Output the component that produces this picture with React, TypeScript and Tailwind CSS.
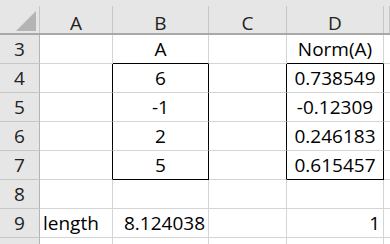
type Row = {
  n: number
  a?: string
  b?: string
  d?: string
  boxed?: boolean
  boxTop?: boolean
  boxEnd?: boolean
  numeric?: boolean
}

const rows: Row[] = [
  { n: 3, b: 'A', d: 'Norm(A)', boxTop: true },
  { n: 4, b: '6', d: '0.738549', boxed: true },
  { n: 5, b: '-1', d: '-0.12309', boxed: true },
  { n: 6, b: '2', d: '0.246183', boxed: true },
  { n: 7, b: '5', d: '0.615457', boxed: true, boxEnd: true },
  { n: 8 },
  { n: 9, a: 'length', b: '8.124038', d: '1', numeric: true },
]

const cols = ['A', 'B', 'C', 'D', '']

export default function App() {
  return (
    <div
      className="w-[390px] h-[244px] overflow-hidden bg-white text-[19px] leading-[20px] text-black"
      style={{ fontFamily: '"Open Sans", "Noto Sans", sans-serif' }}
    >
      {/* column letters */}
      <div className="bg-[#e6e6e6] pt-[6px] border-b-2 border-[#a8a8a8]">
        <div className="grid grid-cols-[40px_73px_96px_78px_97px_1fr] h-[27px]">
          <div className="flex justify-end items-end pr-[3px] pb-[2px] border-r border-[#c6c6c6]">
            <svg width="20" height="20" viewBox="0 0 20 20">
              <polygon points="20,0 20,20 0,20" fill="#b4b4b4" />
            </svg>
          </div>
          {cols.map((c, i) => (
            <div
              key={i}
              className="flex items-center justify-center pt-[6px] border-r border-[#c6c6c6] text-[#222]"
            >
              {c}
            </div>
          ))}
        </div>
      </div>

      {/* sheet body */}
      <div className="grid grid-cols-[40px_73px_96px_78px_97px_1fr]">
        {rows.map((r) => (
          <div key={r.n} className="contents">
            <div className="h-[29px] flex items-center justify-center bg-[#e6e6e6] border-r border-r-[#b4b4b4] border-b border-b-[#c6c6c6] text-[#222]">
              {r.n}
            </div>
            <div
              className={`h-[29px] flex items-center pl-[3px] border-r border-b border-b-[#d4d4d4] ${
                r.boxed ? 'border-r-black' : 'border-r-[#d4d4d4]'
              }`}
            >
              {r.a}
            </div>
            <div
              className={`h-[29px] flex items-center border-r border-b ${
                r.numeric ? 'justify-end pr-[3px]' : 'justify-center'
              } ${r.boxed ? 'border-r-black' : 'border-r-[#d4d4d4]'} ${
                r.boxTop || r.boxEnd ? 'border-b-black' : 'border-b-[#d4d4d4]'
              }`}
            >
              {r.b}
            </div>
            <div
              className={`h-[29px] border-r border-b border-b-[#d4d4d4] ${
                r.boxed ? 'border-r-black' : 'border-r-[#d4d4d4]'
              }`}
            />
            <div
              className={`h-[29px] flex items-center border-r border-b ${
                r.numeric ? 'justify-end pr-[3px]' : 'justify-center'
              } ${r.boxed ? 'border-r-black' : 'border-r-[#d4d4d4]'} ${
                r.boxTop || r.boxEnd ? 'border-b-black' : 'border-b-[#d4d4d4]'
              }`}
            >
              {r.d}
            </div>
            <div className="h-[29px] border-b border-[#d4d4d4]" />
          </div>
        ))}

        {/* next row, mostly below the fold */}
        <div className="h-[29px] bg-[#e6e6e6] border-r border-[#b4b4b4]" />
        <div className="h-[29px] border-r border-[#d4d4d4]" />
        <div className="h-[29px] border-r border-[#d4d4d4]" />
        <div className="h-[29px] border-r border-[#d4d4d4]" />
        <div className="h-[29px] border-r border-[#d4d4d4]" />
        <div className="h-[29px]" />
      </div>
    </div>
  )
}
